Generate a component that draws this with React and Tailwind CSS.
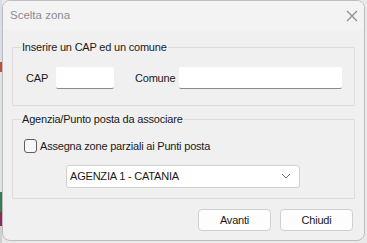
export default function App() {
  return (
    <div
      className="w-[367px] h-[243px] bg-[#e9e9e9] flex overflow-hidden"
      style={{ fontFamily: '"Liberation Sans", Arial, sans-serif' }}
    >
      {/* app behind the dialog */}
      <div className="w-[2px] flex flex-col shrink-0">
        <div className="h-[62px] bg-[#d8dde6]" />
        <div className="h-[10px] bg-[#c44a3a]" />
        <div className="h-[120px] bg-[#dfe6df]" />
        <div className="h-[20px] bg-[#3c7a55]" />
        <div className="h-[14px] bg-[#8a2d5a]" />
        <div className="flex-1 bg-[#d0d0d0]" />
      </div>

      <div className="w-[363px] h-[241px] bg-[#f0f0f0] rounded-[8px] border border-[#bdbdbd] flex flex-col overflow-hidden text-[11px] tracking-[-0.2px] text-[#1a1a1a]">
        {/* title bar */}
        <div className="h-[29px] bg-[#f3f3f3] flex items-center justify-between pl-[7px] pr-[4px] shrink-0">
          <span className="text-[#8c8c8c] text-[11.5px] tracking-normal">Scelta zona</span>
          <svg width="12" height="12" viewBox="0 0 12 12" className="mr-[2px]">
            <path d="M1 1L11 11M11 1L1 11" stroke="#8a8a8a" strokeWidth="1.1" />
          </svg>
        </div>

        <div className="flex-1 flex flex-col px-[9px]">
          {/* group 1 */}
          <fieldset className="mt-[9px] h-[67px] border border-[#dcdcdc] pl-[8px] pr-[12px] rounded-[1px]">
            <legend className="px-[1px] leading-[16px]">Inserire un CAP ed un comune</legend>
            <div className="flex items-center mt-[12px] pl-[5px]">
              <span className="w-[30px] shrink-0">CAP</span>
              <div className="w-[58px] h-[22px] bg-white border-b border-[#8a8a8a] rounded-[2px] shrink-0" />
              <span className="ml-[21px] w-[44px] shrink-0">Comune</span>
              <div className="w-[163px] h-[22px] bg-white border-b border-[#8a8a8a] rounded-[2px] shrink-0" />
            </div>
          </fieldset>

          {/* group 2 */}
          <fieldset className="mt-[5px] h-[88px] border border-[#dcdcdc] pl-[8px] pr-[12px] rounded-[1px]">
            <legend className="px-[1px] leading-[16px]">Agenzia/Punto posta da associare</legend>
            <div className="flex items-center mt-[11px] pl-[3px]">
              <div className="w-[13px] h-[14px] border border-[#5f5f5f] rounded-[3px] bg-[#f7f7f7]" />
              <span className="ml-[3px]">Assegna zone parziali ai Punti posta</span>
            </div>
            <div className="mt-[10px] ml-[45px] w-[234px] h-[23px] bg-white border border-[#d0d0d0] rounded-[3px] flex items-center justify-between pl-[3px] pr-[8px]">
              <span>AGENZIA 1 - CATANIA</span>
              <svg width="10" height="6" viewBox="0 0 10 6">
                <path d="M1 1L5 5L9 1" stroke="#6a6a6a" strokeWidth="1" fill="none" />
              </svg>
            </div>
          </fieldset>

          {/* buttons */}
          <div className="flex justify-end gap-[9px] mt-[10px] pr-[2px]">
            <button className="w-[73px] h-[22px] bg-[#fdfdfd] border border-[#d0d0d0] rounded-[4px]">Avanti</button>
            <button className="w-[73px] h-[22px] bg-[#fdfdfd] border border-[#d0d0d0] rounded-[4px]">Chiudi</button>
          </div>
        </div>
      </div>
    </div>
  );
}
